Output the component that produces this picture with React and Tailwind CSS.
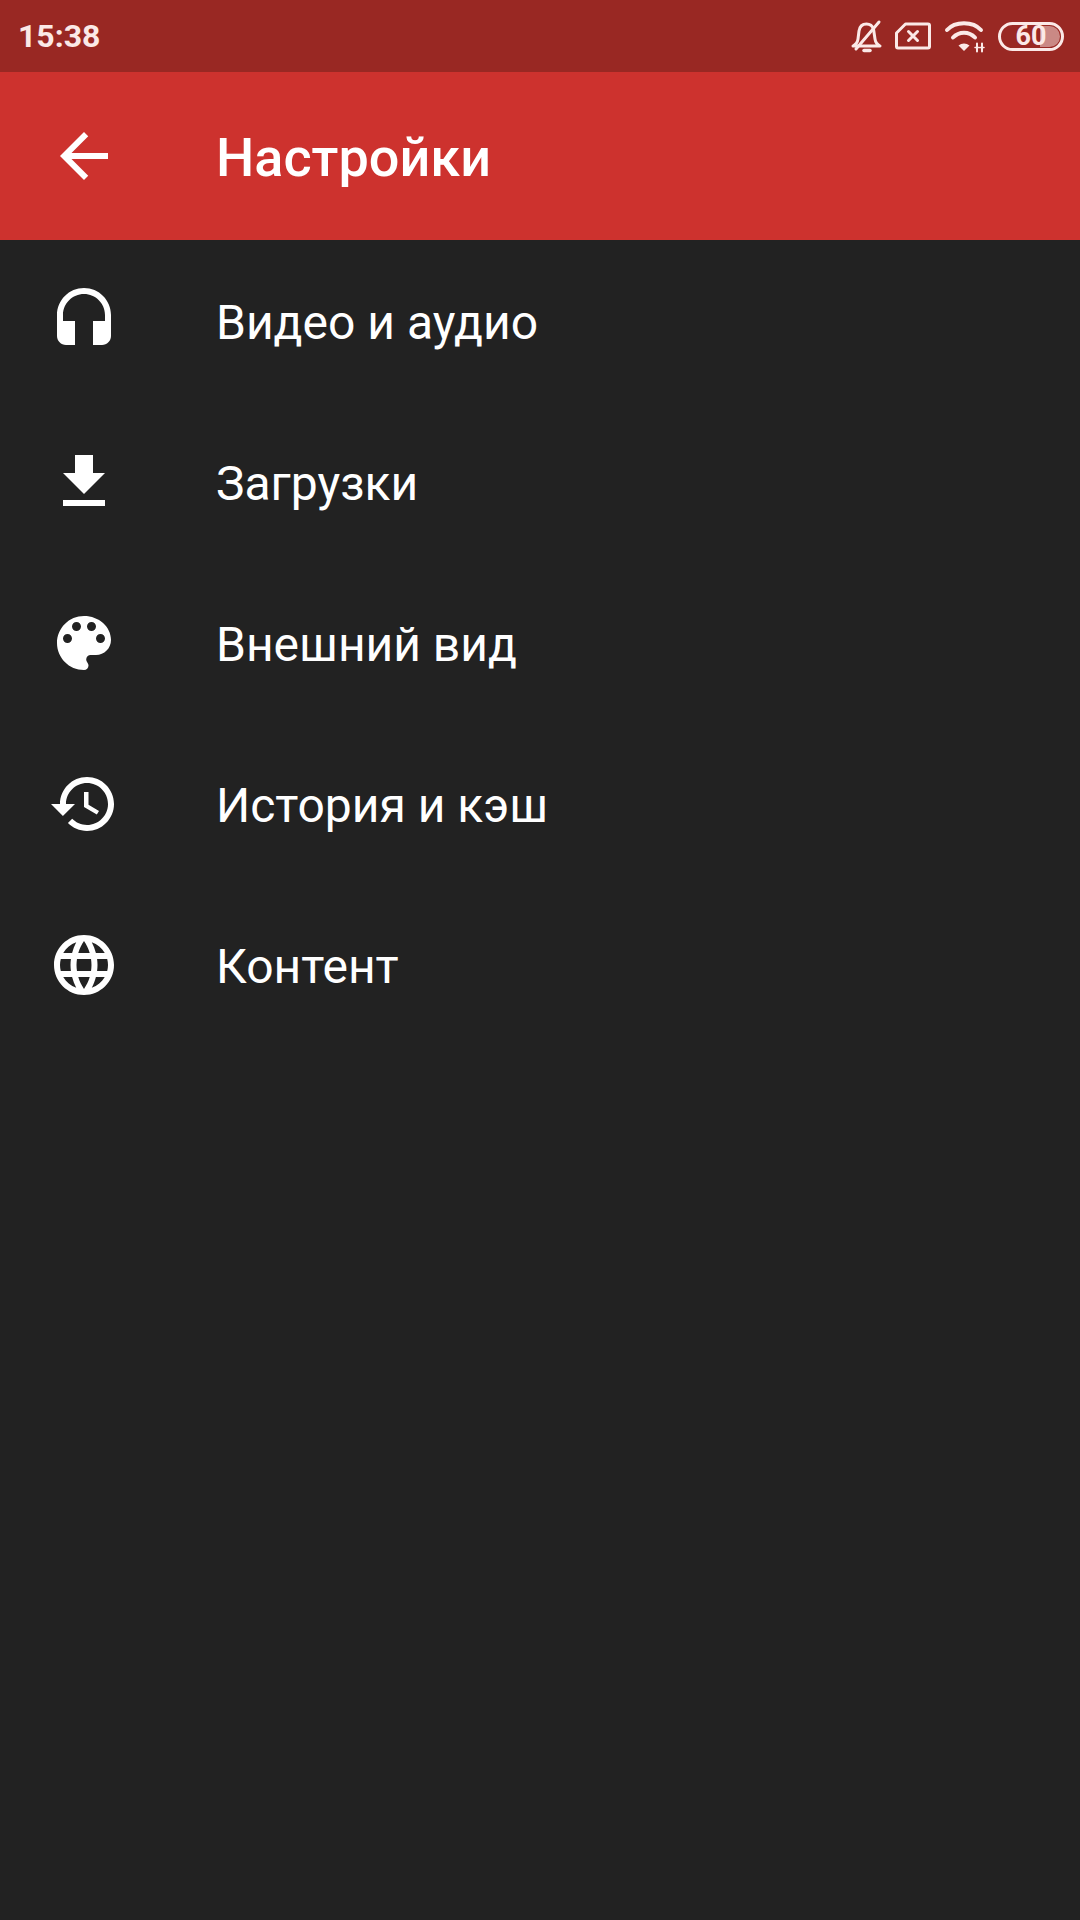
const Icon = ({ d }) => (
  <svg viewBox="0 0 24 24" className="w-[72px] h-[72px] fill-white">
    <path d={d} />
  </svg>
);

// Material icon paths
const items = [
  {
    label: 'Видео и аудио',
    d: 'M12 1c-4.97 0-9 4.03-9 9v7c0 1.66 1.34 3 3 3h3v-8H5v-2c0-3.87 3.13-7 7-7s7 3.13 7 7v2h-4v8h3c1.66 0 3-1.34 3-3v-7c0-4.97-4.03-9-9-9z',
  },
  { label: 'Загрузки', d: 'M19 9h-4V3H9v6H5l7 7 7-7zM5 18v2h14v-2H5z' },
  {
    label: 'Внешний вид',
    d: 'M12 3c-4.97 0-9 4.03-9 9s4.03 9 9 9c.83 0 1.5-.67 1.5-1.5 0-.39-.15-.74-.39-1.01-.23-.26-.38-.61-.38-.99 0-.83.67-1.5 1.5-1.5H16c2.76 0 5-2.24 5-5 0-4.42-4.03-8-9-8zm-5.5 9c-.83 0-1.5-.67-1.5-1.5S5.67 9 6.5 9 8 9.67 8 10.5 7.33 12 6.5 12zm3-4C8.67 8 8 7.33 8 6.5S8.67 5 9.5 5s1.5.67 1.5 1.5S10.33 8 9.5 8zm5 0c-.83 0-1.5-.67-1.5-1.5S13.67 5 14.5 5s1.5.67 1.5 1.5S15.33 8 14.5 8zm3 4c-.83 0-1.5-.67-1.5-1.5S16.67 9 17.5 9s1.5.67 1.5 1.5-.67 1.5-1.5 1.5z',
  },
  {
    label: 'История и кэш',
    d: 'M13 3c-4.97 0-9 4.03-9 9H1l3.89 3.89.07.14L9 12H6c0-3.87 3.13-7 7-7s7 3.13 7 7-3.13 7-7 7c-1.93 0-3.68-.79-4.94-2.06l-1.42 1.42C8.27 19.99 10.51 21 13 21c4.97 0 9-4.03 9-9s-4.03-9-9-9zm-1 5v5l4.28 2.54.72-1.21-3.5-2.08V8H12z',
  },
  {
    label: 'Контент',
    d: 'M11.99 2C6.47 2 2 6.48 2 12s4.47 10 9.99 10C17.52 22 22 17.52 22 12S17.52 2 11.99 2zm6.93 6h-2.95c-.32-1.25-.78-2.45-1.38-3.56 1.84.63 3.37 1.91 4.33 3.56zM12 4.04c.83 1.2 1.48 2.53 1.91 3.96h-3.82c.43-1.43 1.08-2.76 1.91-3.96zM4.26 14C4.1 13.36 4 12.69 4 12s.1-1.36.26-2h3.38c-.08.66-.14 1.32-.14 2 0 .68.06 1.34.14 2H4.26zm.82 2h2.95c.32 1.25.78 2.45 1.38 3.56-1.84-.63-3.37-1.9-4.33-3.56zm2.95-8H5.08c.96-1.66 2.49-2.93 4.33-3.56C8.81 5.55 8.35 6.75 8.03 8zM12 19.96c-.83-1.2-1.48-2.53-1.91-3.96h3.82c-.43 1.43-1.08 2.76-1.91 3.96zM14.34 14H9.66c-.09-.66-.16-1.32-.16-2 0-.68.07-1.35.16-2h4.68c.09.65.16 1.32.16 2 0 .68-.07 1.34-.16 2zm.25 5.56c.6-1.11 1.06-2.31 1.38-3.56h2.95c-.96 1.65-2.49 2.93-4.33 3.56zM16.36 14c.08-.66.14-1.32.14-2 0-.68-.06-1.34-.14-2h3.38c.16.64.26 1.31.26 2s-.1 1.36-.26 2h-3.38z',
  },
];

const StatusIcons = () => (
  <div className="flex items-center text-[#fbe9e7]">
    {/* muted bell */}
    <svg viewBox="0 0 32 34" className="w-8 h-[34px] mr-[12px]" fill="none" stroke="currentColor" strokeWidth="3" strokeLinecap="round" strokeLinejoin="round">
      <path d="M2 27c3-1.500 4.500-3.500 5-7l1-8c.7-4.500 3.500-7 7.500-7 3.500 0 6 2 7 5l1.500 10c.5 3.500 2 5.500 5 7z" />
      <path d="M5 30 28 3" />
      <path d="M13 31.500h6" strokeWidth="3.500" />
    </svg>
    {/* sim with x */}
    <svg viewBox="0 0 36 28" className="w-9 h-7 mr-[13px]" fill="none" stroke="currentColor" strokeWidth="3" strokeLinejoin="round">
      <path d="M10.500 2H33a1.500 1.500 0 0 1 1.500 1.500v21A1.500 1.500 0 0 1 33 26H3a1.500 1.500 0 0 1-1.500-1.500V11z" />
      <path d="M13.500 9.500l9 9M22.500 9.500l-9 9" strokeWidth="3" strokeLinecap="round" />
    </svg>
    {/* wifi */}
    <svg viewBox="0 0 42 34" className="w-[42px] h-[34px] mr-[12px]" fill="none" stroke="currentColor" strokeWidth="4" strokeLinecap="round">
      <path d="M3 11C11 2 29 2 37 11" />
      <path d="M9 18.500c6-6.500 16-6.500 22 0" />
      <path d="M20 32l-5.500-5.500c3.300-2.800 7.700-2.800 11 0z" fill="currentColor" stroke="none" />
      <path d="M33 24.500v8M38 24.500v8" strokeWidth="2" />
      <path d="M31 28.500h4M36 28.500h4" strokeWidth="1.500" />
    </svg>
    {/* battery */}
    <div className="relative w-[66px] h-[29px] rounded-full border-[3px] border-[#fbe9e7] flex items-center justify-center">
      <div className="absolute left-[39px] top-[1px] bottom-[1px] right-[1px] rounded-r-full bg-[#fbe9e7]/50" />
      <span className="relative font-bold text-[27px] leading-[23px]">60</span>
    </div>
  </div>
);

const App = () => {
  return (
    <div className="w-[1080px] h-[1920px] bg-[#222222] font-['Roboto',sans-serif] text-white overflow-hidden">
      <div className="h-[72px] bg-[#992823] flex items-center justify-between pl-[18px] pr-[16px]">
        <span className="text-[32px] font-bold text-[#fbe9e7]">15:38</span>
        <StatusIcons />
      </div>

      <div className="h-[168px] bg-[#cd322e] flex items-center pl-[48px]">
        <Icon d="M20 11H7.830l5.590-5.590L12 4l-8 8 8 8 1.410-1.410L7.830 13H20v-2z" />
        <h1 className="ml-[96px] pt-[3px] text-[54px] font-medium">Настройки</h1>
      </div>

      <div className="flex flex-col">
        {items.map((item) => (
          <div key={item.label} className="h-[161px] flex items-center pl-[48px]">
            <Icon d={item.d} />
            <span className="ml-[96px] pt-[4px] text-[48px]">{item.label}</span>
          </div>
        ))}
      </div>
    </div>
  );
};

export default App;
